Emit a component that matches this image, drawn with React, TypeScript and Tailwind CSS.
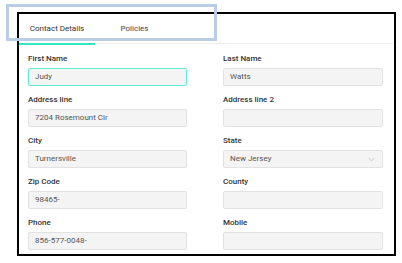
import React from "react";

const Field = ({ label, value, focused, select }: { label: string; value?: string; focused?: boolean; select?: boolean }) => (
  <div className="flex flex-col">
    <div className="h-[10px] leading-[10px] text-[8px] font-medium text-[#333] mb-[4px]">{label}</div>
    <div
      className={
        "h-[18px] rounded-[2px] bg-[#f4f4f4] flex items-center justify-between pl-[6px] pr-[6px] text-[8px] text-[#555] border " +
        (focused ? "border-[#5ceed2]" : "border-[#e2e2e2]")
      }
    >
      <span>{value}</span>
      {select && (
        <svg width="7" height="5" viewBox="0 0 7 5" className="mr-[1px]">
          <path d="M0.8 1 L3.5 3.8 L6.2 1" fill="none" stroke="#c4c4c4" strokeWidth="0.9" />
        </svg>
      )}
    </div>
  </div>
);

export default function App() {
  return (
    <div className="relative w-[402px] h-[263px] bg-white overflow-hidden" style={{ fontFamily: "Roboto, 'Liberation Sans', sans-serif" }}>
      <div className="ml-[17px] mt-[12px] w-[379px] h-[244px] border-2 border-black bg-white overflow-hidden">
        <div className="flex h-[30px] border-b border-[#eeeeee]">
          <div className="w-[76px] h-[31px] shrink-0 flex items-center justify-center border-b-2 border-[#33e6c2] text-[8px] text-[#333]">
            Contact Details
          </div>
          <div className="w-[79px] h-[31px] shrink-0 flex items-center justify-center border-b-2 border-transparent text-[8px] text-[#444]">
            Policies
          </div>
        </div>
        <div className="pl-[9px] pt-[10px] grid grid-cols-[159px_160px] gap-x-[36px] gap-y-[9px]">
          <Field label="First Name" value="Judy" focused />
          <Field label="Last Name" value="Watts" />
          <Field label="Address line" value="7204 Rosemount Cir" />
          <Field label="Address line 2" />
          <Field label="City" value="Turnersville" />
          <Field label="State" value="New Jersey" select />
          <Field label="Zip Code" value="98465-" />
          <Field label="County" />
          <Field label="Phone" value="856-577-0048-" />
          <Field label="Mobile" />
        </div>
      </div>
      <div className="absolute left-[6px] top-[4px] w-[211px] h-[37px] border-[3px] border-[#b9cde6]" />
    </div>
  );
}
